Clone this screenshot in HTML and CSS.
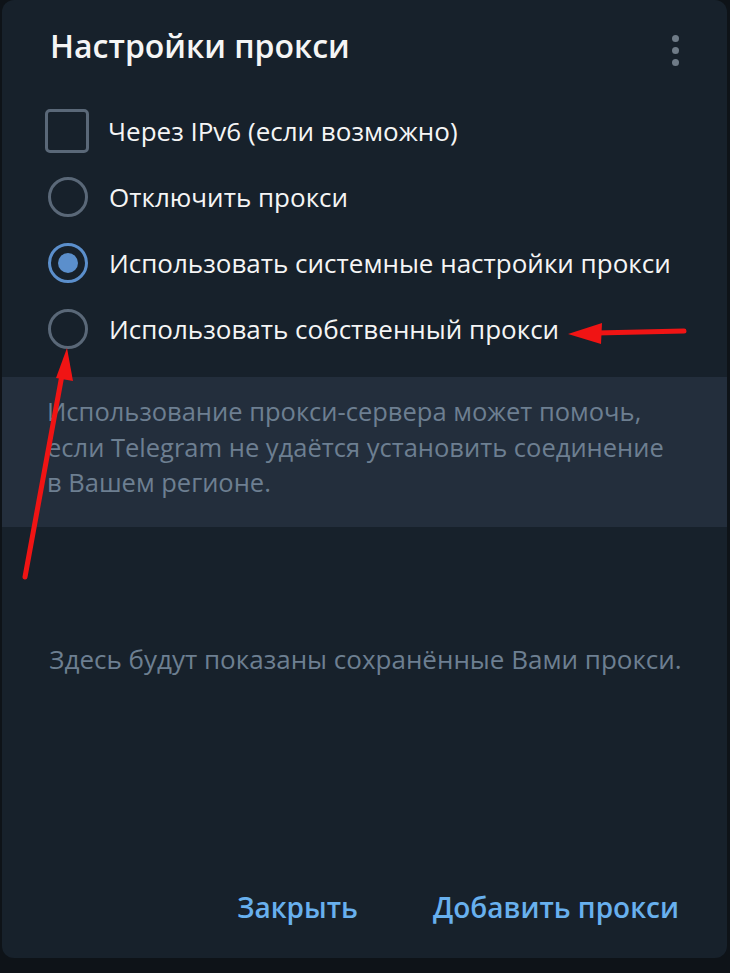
FILE: index.html
```html
<!DOCTYPE html>
<html lang="ru">
<head>
    <meta charset="UTF-8">
    <meta name="viewport" content="width=device-width, initial-scale=1.0">
    <title>Настройки прокси</title>
    <link rel="stylesheet" href="styles.css">
</head>
<body>

    <div class="dialog">
        <div class="dialog-header">
            <div class="dialog-title">Настройки прокси</div>
            <div class="menu-btn">
                <span></span>
                <span></span>
                <span></span>
            </div>
        </div>

        <div class="options">
            <div class="option">
                <div class="checkbox"></div>
                <div class="option-label">Через IPv6 (если возможно)</div>
            </div>
            <div class="option">
                <div class="radio"></div>
                <div class="option-label">Отключить прокси</div>
            </div>
            <div class="option">
                <div class="radio checked"></div>
                <div class="option-label">Использовать системные настройки прокси</div>
            </div>
            <div class="option">
                <div class="radio"></div>
                <div class="option-label">Использовать собственный прокси</div>
            </div>
        </div>

        <div class="note">
            Использование прокси-сервера может помочь,<br>
            если Telegram не удаётся установить соединение<br>
            в Вашем регионе.
        </div>

        <div class="empty-text">Здесь будут показаны сохранённые Вами прокси.</div>

        <div class="dialog-footer">
            <button class="link-btn">Закрыть</button>
            <button class="link-btn">Добавить прокси</button>
        </div>
    </div>

    <!-- red arrows drawn over the screenshot -->
    <svg class="annotations" width="730" height="973" viewBox="0 0 730 973">
        <line x1="684" y1="331" x2="596" y2="333" stroke="#f01414" stroke-width="5" stroke-linecap="round"/>
        <polygon points="568,334 602,323 601,344" fill="#f01414"/>
        <line x1="25" y1="577" x2="62" y2="375" stroke="#f01414" stroke-width="5" stroke-linecap="round"/>
        <polygon points="67,348 73,381 56,378" fill="#f01414"/>
    </svg>

</body>
</html>
```

FILE: styles.css
```css
body {
    margin: 0;
    background-color: #0e1318;
    font-family: 'Open Sans', 'Noto Sans', sans-serif;
    width: 730px;
    height: 973px;
    overflow: hidden;
    position: relative;
}

.dialog {
    display: flex;
    flex-direction: column;
    width: 725px;
    height: 958px;
    margin-left: 2px;
    background-color: #17212b;
    border-radius: 12px;
    box-sizing: border-box;
}

.dialog-header {
    display: flex;
    justify-content: space-between;
    align-items: center;
    height: 92px;
    padding: 0 48px 0 48px;
}

.dialog-title {
    font-size: 32px;
    font-weight: 600;
    color: #f5f5f5;
    margin-top: -2px;
}

.menu-btn {
    display: flex;
    flex-direction: column;
    gap: 5px;
    margin-top: 8px;
}

.menu-btn span {
    width: 7px;
    height: 7px;
    border-radius: 50%;
    background-color: #6f7b87;
}

.options {
    display: flex;
    flex-direction: column;
    padding-top: 6px;
}

.option {
    display: flex;
    align-items: center;
    height: 66px;
    padding-left: 43px;
    color: #f5f5f5;
    font-size: 26px;
}

.option-label {
    margin-left: 19px;
}

.checkbox {
    width: 38px;
    height: 38px;
    border: 3px solid #5a6878;
    border-radius: 5px;
}

.radio {
    width: 34px;
    height: 34px;
    margin: 0 2px 0 3px;
    border: 3px solid #5a6878;
    border-radius: 50%;
    display: flex;
    align-items: center;
    justify-content: center;
}

.radio.checked {
    border-color: #5b8fcc;
}

.radio.checked::after {
    content: '';
    width: 20px;
    height: 20px;
    border-radius: 50%;
    background-color: #5b8fcc;
}

.note {
    margin-top: 15px;
    padding: 17px 20px 26px 45px;
    background-color: #232e3c;
    color: #6d7f91;
    font-size: 25.5px;
    line-height: 35.5px;
}

.empty-text {
    margin-top: 114px;
    text-align: center;
    color: #6d7f91;
    font-size: 26px;
    line-height: 36px;
    padding-left: 2px;
}

.dialog-footer {
    display: flex;
    justify-content: flex-end;
    gap: 75px;
    margin-top: auto;
    padding: 0 48px 33px 0;
}

.link-btn {
    background: none;
    border: none;
    padding: 0;
    font-family: 'Open Sans', 'Noto Sans', sans-serif;
    font-size: 28px;
    font-weight: 600;
    color: #68b0ee;
    cursor: pointer;
    line-height: 36px;
}

.annotations {
    position: absolute;
    top: 0;
    left: 0;
    pointer-events: none;
}
```
